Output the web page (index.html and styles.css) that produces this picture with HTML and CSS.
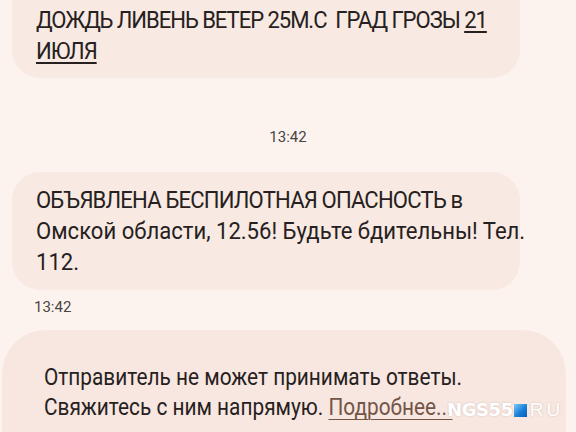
FILE: index.html
```html
<!DOCTYPE html>
<html lang="ru">
<head>
<meta charset="utf-8">
<link rel="stylesheet" href="styles.css">
</head>
<body>
<main class="thread">
  <div class="bubble bubble-top">
    <p class="msg"><span class="caps caps-tight">ДОЖДЬ ЛИВЕНЬ ВЕТЕР 25М.С&nbsp; ГРАД ГРОЗЫ <u>21</u><br><u>ИЮЛЯ</u></span></p>
  </div>
  <div class="stamp stamp-center">13:42</div>
  <div class="bubble bubble-alert">
    <p class="msg"><span class="caps">ОБЪЯВЛЕНА БЕСПИЛОТНАЯ ОПАСНОСТЬ в</span><br>Омской области, 12.56! Будьте бдительны! Тел.<br>112.</p>
  </div>
  <div class="stamp stamp-left">13:42</div>
  <div class="notice">
    <p class="notice-text">Отправитель не может принимать ответы.<br>Свяжитесь с ним напрямую. <a class="more">Подробнее...</a></p>
  </div>
</main>
<div class="mark"><span class="mark-ngs">NGS55</span><span class="mark-dot"></span><span class="mark-ru">RU</span></div>
</body>
</html>
```
FILE: styles.css
```css
html, body {
  margin: 0;
  height: 100%;
  overflow: hidden;
}
body {
  background: #fcf3ef;
  font-family: Roboto, "Noto Sans", sans-serif;
  color: #262120;
  position: relative;
}
.thread {
  display: flex;
  flex-direction: column;
}

/* incoming message bubbles */
.bubble {
  margin: 0 56px 0 12px;
  background: #f8e9e3;
  border-radius: 28px;
  padding: 13px 20px 12px 24px;
}
.bubble-top {
  margin-top: -30px;
  padding-top: 35px;
  padding-bottom: 11px;
}
.msg {
  margin: 0;
  font-size: 24px;
  line-height: 31px;
  white-space: nowrap;
  transform: scaleX(0.92);
  transform-origin: 0 0;
}
.caps {
  letter-spacing: -0.9px;
}
.caps-tight {
  letter-spacing: -1.15px;
}
.msg u {
  text-decoration-thickness: 2px;
  text-underline-offset: 3px;
}

/* timestamps */
.stamp {
  font-size: 15px;
  line-height: 18px;
  color: #4a4442;
}
.stamp-center {
  text-align: center;
  margin: 50px 0 26px;
}
.stamp-left {
  margin: 8px 0 0 34px;
}

/* sender notice at the bottom */
.notice {
  margin: 14px 10px 0 2px;
  background: #f8e7e0;
  border-radius: 44px 44px 0 0;
  padding: 33px 20px 40px 42px;
}
.notice-text {
  margin: 0;
  font-size: 23px;
  line-height: 30px;
  white-space: nowrap;
  transform: scaleX(0.905);
  transform-origin: 0 0;
}
.more {
  color: #735548;
  text-decoration: underline;
  text-decoration-thickness: 1px;
  text-underline-offset: 4px;
}

/* watermark */
.mark {
  position: absolute;
  left: 447px;
  top: 400px;
  display: flex;
  align-items: center;
  line-height: 20px;
  color: #ffffff;
  text-shadow: 0 0 2px rgba(120, 110, 110, 0.35);
}
.mark-ngs {
  font-family: "DejaVu Sans", sans-serif;
  font-weight: bold;
  font-size: 18px;
  letter-spacing: -0.4px;
}
.mark-dot {
  width: 13px;
  height: 13px;
  margin: 0 3px 0 1px;
  background: linear-gradient(135deg, #7cccf7, #1a80d8 55%, #0b5db8);
}
.mark-ru {
  font-family: "Liberation Sans", sans-serif;
  font-size: 19px;
  letter-spacing: 3px;
}
```
